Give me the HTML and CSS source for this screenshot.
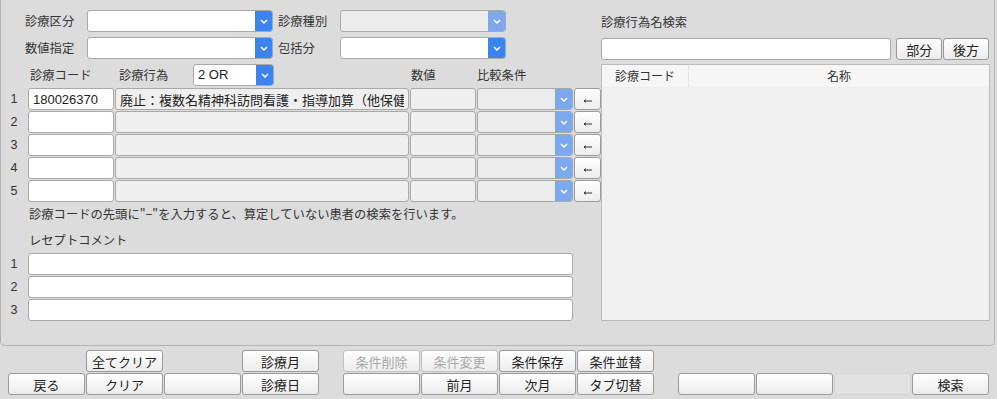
FILE: index.html
```html
<!DOCTYPE html>
<html lang="ja">
<head>
    <meta charset="UTF-8">
    <title>診療行為検索条件</title>
    <link rel="stylesheet" href="styles.css">
</head>
<body>

<div class="panel">
    <!-- 左側：検索条件 -->
    <div class="left">
        <div class="row row-top">
            <span class="lbl">診療区分</span>
            <div class="sel w186"><span class="val"></span><span class="drop"><svg width="8" height="5"><polyline points="1,1 4,4 7,1"/></svg></span></div>
            <span class="lbl lbl2">診療種別</span>
            <div class="sel w166 off"><span class="val"></span><span class="drop"><svg width="8" height="5"><polyline points="1,1 4,4 7,1"/></svg></span></div>
        </div>
        <div class="row row-top">
            <span class="lbl">数値指定</span>
            <div class="sel w186"><span class="val"></span><span class="drop"><svg width="8" height="5"><polyline points="1,1 4,4 7,1"/></svg></span></div>
            <span class="lbl lbl2">包括分</span>
            <div class="sel w166"><span class="val"></span><span class="drop"><svg width="8" height="5"><polyline points="1,1 4,4 7,1"/></svg></span></div>
        </div>
        <div class="row row-head">
            <span class="h-code">診療コード</span>
            <span class="h-act">診療行為</span>
            <div class="sel w81"><span class="val">2 OR</span><span class="drop"><svg width="8" height="5"><polyline points="1,1 4,4 7,1"/></svg></span></div>
            <span class="h-num">数値</span>
            <span class="h-cmp">比較条件</span>
        </div>

        <div class="lines">
            <div class="line">
                <span class="num">1</span>
                <input class="inp code" type="text" value="180026370">
                <input class="inp name off" type="text" value="廃止：複数名精神科訪問看護・指導加算（他保健師等）" readonly>
                <input class="inp val-in off" type="text" readonly>
                <div class="sel cmp off"><span class="val"></span><span class="drop"><svg width="8" height="5"><polyline points="1,1 4,4 7,1"/></svg></span></div>
                <button class="arrow"><svg width="10" height="6"><path d="M1 3 H9 M1 3 L3 1.6 M1 3 L3 4.4"/></svg></button>
            </div>
            <div class="line">
                <span class="num">2</span>
                <input class="inp code" type="text">
                <input class="inp name off" type="text" readonly>
                <input class="inp val-in off" type="text" readonly>
                <div class="sel cmp off"><span class="val"></span><span class="drop"><svg width="8" height="5"><polyline points="1,1 4,4 7,1"/></svg></span></div>
                <button class="arrow"><svg width="10" height="6"><path d="M1 3 H9 M1 3 L3 1.6 M1 3 L3 4.4"/></svg></button>
            </div>
            <div class="line">
                <span class="num">3</span>
                <input class="inp code" type="text">
                <input class="inp name off" type="text" readonly>
                <input class="inp val-in off" type="text" readonly>
                <div class="sel cmp off"><span class="val"></span><span class="drop"><svg width="8" height="5"><polyline points="1,1 4,4 7,1"/></svg></span></div>
                <button class="arrow"><svg width="10" height="6"><path d="M1 3 H9 M1 3 L3 1.6 M1 3 L3 4.4"/></svg></button>
            </div>
            <div class="line">
                <span class="num">4</span>
                <input class="inp code" type="text">
                <input class="inp name off" type="text" readonly>
                <input class="inp val-in off" type="text" readonly>
                <div class="sel cmp off"><span class="val"></span><span class="drop"><svg width="8" height="5"><polyline points="1,1 4,4 7,1"/></svg></span></div>
                <button class="arrow"><svg width="10" height="6"><path d="M1 3 H9 M1 3 L3 1.6 M1 3 L3 4.4"/></svg></button>
            </div>
            <div class="line">
                <span class="num">5</span>
                <input class="inp code" type="text">
                <input class="inp name off" type="text" readonly>
                <input class="inp val-in off" type="text" readonly>
                <div class="sel cmp off"><span class="val"></span><span class="drop"><svg width="8" height="5"><polyline points="1,1 4,4 7,1"/></svg></span></div>
                <button class="arrow"><svg width="10" height="6"><path d="M1 3 H9 M1 3 L3 1.6 M1 3 L3 4.4"/></svg></button>
            </div>
        </div>

        <p class="note">診療コードの先頭に"−"を入力すると、算定していない患者の検索を行います。</p>

        <p class="sub">レセプトコメント</p>
        <div class="comments">
            <div class="line"><span class="num">1</span><input class="inp comment" type="text"></div>
            <div class="line"><span class="num">2</span><input class="inp comment" type="text"></div>
            <div class="line"><span class="num">3</span><input class="inp comment" type="text"></div>
        </div>
    </div>

    <!-- 右側：診療行為名検索 -->
    <div class="right">
        <p class="title">診療行為名検索</p>
        <div class="search-row">
            <input class="inp search" type="text">
            <button class="b small">部分</button>
            <button class="b small">後方</button>
        </div>
        <div class="table">
            <div class="thead">
                <span class="th code-col">診療コード</span>
                <span class="th">名称</span>
            </div>
        </div>
    </div>
</div>

<!-- 下部ボタン -->
<div class="toolbar">
    <div class="group">
        <span></span>
        <button class="b">全てクリア</button>
        <span></span>
        <button class="b">診療月</button>
        <button class="b">戻る</button>
        <button class="b">クリア</button>
        <button class="b"></button>
        <button class="b">診療日</button>
    </div>
    <div class="group">
        <button class="b off">条件削除</button>
        <button class="b off">条件変更</button>
        <button class="b">条件保存</button>
        <button class="b">条件並替</button>
        <button class="b"></button>
        <button class="b">前月</button>
        <button class="b">次月</button>
        <button class="b">タブ切替</button>
    </div>
    <div class="group">
        <span></span>
        <span></span>
        <span></span>
        <span></span>
        <button class="b"></button>
        <button class="b"></button>
        <button class="b dim"></button>
        <button class="b">検索</button>
    </div>
</div>

</body>
</html>
```

FILE: styles.css
```css
body {
    margin: 0;
    width: 997px;
    height: 399px;
    overflow: hidden;
    background-color: #dcdcdc;
    font-family: "Noto Sans CJK JP", sans-serif;
    font-size: 12.3px;
    color: #333;
}
p {
    margin: 0;
}
.panel {
    display: flex;
    width: 995px;
    height: 346px;
    box-sizing: border-box;
    border: 1px solid #b4b4b4;
    border-top: none;
    border-radius: 0 0 5px 5px;
}
.left {
    width: 600px;
    padding-top: 10px;
}
.row {
    display: flex;
    align-items: center;
    height: 22px;
}
.row-top {
    padding-left: 24px;
    margin-bottom: 5px;
}
.lbl {
    width: 62px;
}
.lbl2 {
    margin-left: 5px;
}
.row-head {
    padding-left: 29px;
}
.h-code {
    width: 89px;
}
.h-act {
    width: 74px;
}
.h-num {
    margin-left: 137px;
    width: 66px;
}

/* select */
.sel {
    display: flex;
    height: 22px;
    box-sizing: border-box;
    border: 1px solid #a9a9a9;
    border-radius: 3px;
    background-color: #fff;
    overflow: hidden;
}
.sel .val {
    flex: 1;
    padding-left: 4px;
    font-family: "Liberation Sans", "Noto Sans CJK JP", sans-serif;
    font-size: 13px;
    line-height: 20px;
    color: #222;
}
.sel .drop {
    width: 18px;
    margin: -1px -1px -1px 0;
    background-color: #3b83ef;
    display: flex;
    align-items: center;
    justify-content: center;
}
.sel .drop svg polyline {
    fill: none;
    stroke: #fff;
    stroke-width: 1.5;
}
.sel.off {
    background-color: #ececec;
}
.sel.off .drop {
    background-color: #7ca8ee;
}
.w186 { width: 186px; }
.w166 { width: 166px; }
.w81 { width: 81px; }

/* rows of codes */
.lines {
    margin-top: 2px;
}
.line {
    display: flex;
    gap: 1px;
    height: 22px;
    margin-bottom: 1px;
}
.num {
    width: 26px;
    text-align: center;
    line-height: 22px;
    font-family: "Liberation Sans", sans-serif;
    font-size: 12.5px;
    color: #333;
}
.inp {
    height: 22px;
    box-sizing: border-box;
    margin: 0;
    padding: 0 4px;
    border: 1px solid #a9a9a9;
    border-radius: 3px;
    background-color: #fff;
    font-family: "Liberation Sans", "Noto Sans CJK JP", sans-serif;
    font-size: 13px;
    color: #222;
    outline: none;
}
.inp.off {
    background-color: #efefef;
}
.code { width: 86px; }
.name { width: 295px; }
.val-in { width: 66px; }
.cmp { width: 96px; }
.arrow {
    width: 27px;
    height: 22px;
    padding: 0;
    border: 1px solid #9c9c9c;
    border-radius: 3px;
    background: linear-gradient(#fefefe, #ededed);
    display: flex;
    align-items: center;
    justify-content: center;
}
.arrow svg {
    margin-top: 3px;
}
.arrow path {
    fill: none;
    stroke: #333;
    stroke-width: 1;
}
.note {
    margin-top: 4px;
    padding-left: 28px;
    line-height: 16px;
}
.sub {
    margin-top: 10px;
    padding-left: 28px;
    line-height: 16px;
}
.comments {
    margin-top: 5px;
}
.comment {
    width: 545px;
}

/* right side */
.right {
    width: 389px;
    padding-top: 14px;
}
.title {
    line-height: 16px;
}
.search-row {
    display: flex;
    height: 22px;
    margin-top: 8px;
}
.search {
    width: 291px;
    margin-right: 5px;
}
.b.small {
    width: 46px;
    margin-right: 1px;
}
.table {
    margin-top: 4px;
    height: 257px;
    box-sizing: border-box;
    border: 1px solid #bdbdbd;
    background-color: #f0f0f0;
}
.thead {
    display: flex;
    height: 22px;
    background-color: #f6f6f6;
}
.th {
    flex: 1;
    text-align: center;
    line-height: 21px;
    font-size: 12px;
}
.th.code-col {
    flex: none;
    width: 86px;
    border-right: 1px solid #e4e4e4;
}

/* buttons */
.b {
    height: 22px;
    padding: 0;
    border: 1px solid #9a9a9a;
    border-radius: 3px;
    background: linear-gradient(#fefefe, #ececec);
    font-family: "Noto Sans CJK JP", sans-serif;
    font-size: 13px;
    color: #222;
}
.b.off {
    color: #a9a9a9;
    border-color: #c2c2c2;
}
.b.dim {
    background: #e2e2e2;
    border-color: #d4d4d4;
}
.toolbar {
    display: flex;
    gap: 24px;
    padding: 4px 0 0 8px;
}
.group {
    display: grid;
    grid-template-columns: repeat(4, 77px);
    grid-template-rows: 22px 22px;
    gap: 1px;
}
```
